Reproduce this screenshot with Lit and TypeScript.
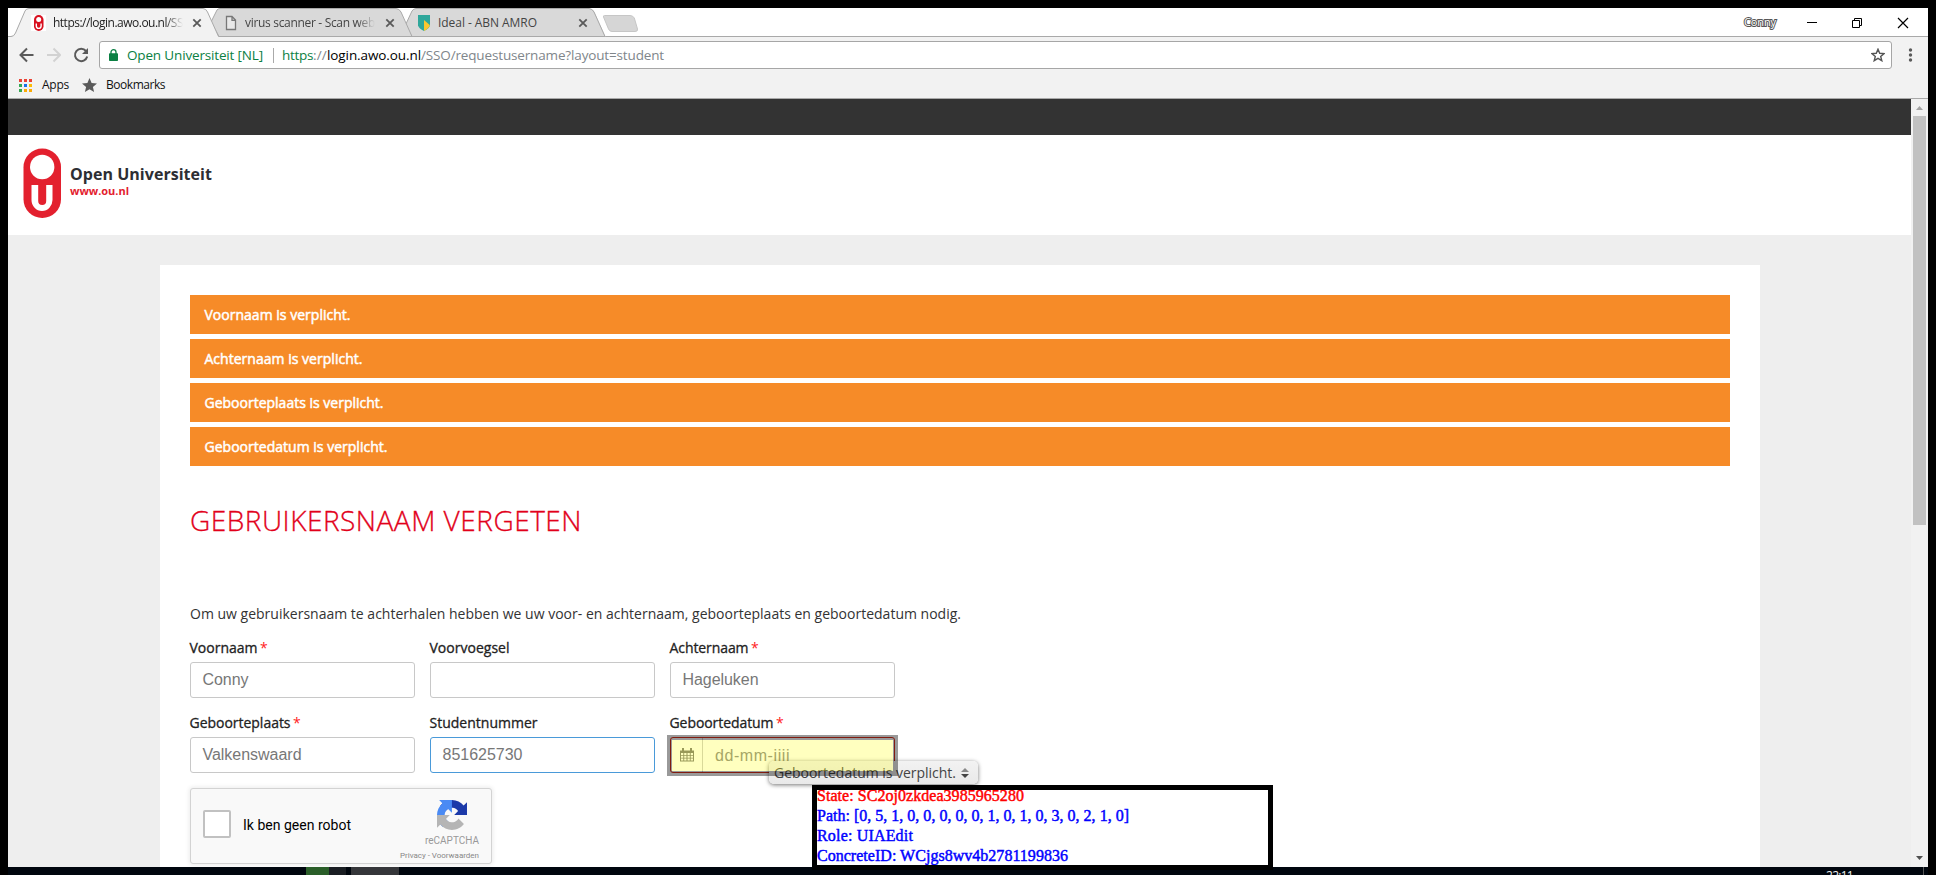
import { LitElement, html, css, svg, nothing } from "lit";
import { customElement, property, state, query } from "lit/decorators.js";
import { styleMap } from "lit/directives/style-map.js";

/** A single line of text whose letter spacing is computed so that it spans `w` pixels. */
@customElement("fit-text")
class FitText extends LitElement {
  @property() text = "";
  @property({ type: Number }) w = 0;
  @state() private spacing = 0;
  @query("span") private span!: HTMLSpanElement;

  static styles = css`
    :host { display: inline-block; white-space: pre; }
  `;

  firstUpdated() {
    const natural = this.span.getBoundingClientRect().width;
    if (this.w && natural) this.spacing = (this.w - natural) / this.text.length;
  }

  render() {
    return html`<span style=${styleMap({ letterSpacing: `${this.spacing}px` })}>${this.text}</span>`;
  }
}

const fit = (text: string, w: number) => html`<fit-text .text=${text} .w=${w}></fit-text>`;

@customElement("browser-chrome")
class BrowserChrome extends LitElement {
  static styles = css`
    :host { display: block; font-family: "Open Sans", "Noto Sans", sans-serif; background: #f2f2f2; color: #222; }
    svg { display: block; flex: none; }
    .strip { display: flex; height: 29px; position: relative; background: #fff; }
    .shapes { position: absolute; left: 0; top: 0; }
    .tab { display: flex; align-items: center; position: relative; height: 29px; box-sizing: border-box; font-size: 12px; line-height: 29px; }
    .t1 { width: 212px; padding-left: 23px; }
    .t2 { width: 196px; padding-left: 5px; color: #444; }
    .t3 { width: 196px; padding-left: 2px; color: #444; }
    .label { margin-left: 7px; overflow: hidden; width: 130px; height: 29px; }
    .t2 .label, .t3 .label { margin-left: 8px; }
    .fade { -webkit-mask-image: linear-gradient(90deg, #000 86%, transparent); mask-image: linear-gradient(90deg, #000 86%, transparent); }
    .close { margin-left: 9px; }
    .t2 .close, .t3 .close { margin-left: 10px; }
    .controls { display: flex; margin-left: auto; position: relative; align-items: center; height: 29px; }
    .user { font-size: 11px; line-height: 27px; color: #fff; -webkit-text-stroke: 2px #555; paint-order: stroke fill; margin-right: 30px; height: 29px; }
    .bar { display: flex; align-items: center; height: 37px; box-sizing: border-box; padding: 0 14px 1px 11px; }
    .nav { display: flex; gap: 12px; margin-right: 10px; }
    .omni { display: flex; align-items: center; flex: 1; height: 28px; box-sizing: border-box; border: 1px solid #a6a6a6; border-radius: 3px; background: #fff; padding: 0 6px 0 9px; font-size: 13.5px; line-height: 26px; margin-right: 15px; }
    .green { color: #0b8043; }
    .org { margin-left: 9px; }
    .sep { width: 1px; height: 15px; background: #aaa; margin: 0 8px 0 10px; }
    .host { color: #000; }
    .rest { color: #80868b; flex: 1; }
    .marks { display: flex; align-items: center; height: 24px; box-sizing: border-box; padding: 0 0 2px 11px; font-size: 12px; line-height: 22px; color: #111; }
    .star { margin: 0 9px 0 13px; }
    .apps { margin-left: 10px; }
    .line { height: 1px; background: #a9a9a9; }
  `;

  private close() {
    return html`<svg class="close" width="10" height="10" viewBox="0 0 10 10"><path d="M1.3 1.3 8.7 8.7M8.7 1.3 1.3 8.7" stroke="#5a5a5a" stroke-width="1.8"/></svg>`;
  }

  render() {
    const dots = ["#ea4335", "#ea4335", "#ea4335", "#34a853", "#1a73e8", "#fbbc05", "#34a853", "#fbab05", "#fbab05"];
    return html`
      <div class="strip">
        <svg class="shapes" width="1920" height="29" viewBox="0 0 1920 29">
          <path d="M0 28.5H1920" stroke="#a9a9a9"/>
          <path d="M206 28.5 402 28.5 396 16 404.500 13 415 .5H580Q585 .5 586.500 4L597.500 28.500H396Z" fill="#d9d9d9" stroke="none"/>
          <path d="M397 18 404 3Q405.500 .5 408 .5H581Q584 .5 586 4L597 28.500H404Z" fill="#d9d9d9" stroke="#a9a9a9"/>
          <path d="M203 14 209 2Q210 .5 212 .5H388Q391 .5 393 4L404 28.500H211Z" fill="#d9d9d9" stroke="#a9a9a9"/>
          <path d="M0 29V28.500H3Q6 28.500 7.500 25L17 3Q18 .5 21 .5H195Q198 .5 199.500 4L210.500 28.500V29Z" fill="#f2f2f2"/>
          <path d="M0 28.500H3Q6 28.500 7.500 25L17 3Q18 .5 21 .5H195Q198 .5 199.500 4L210.500 28.500" fill="none" stroke="#a9a9a9"/>
          <path d="M596.500 7.500H622Q625 7.500 626.300 10L629.500 21Q630 23.500 627 23.500H604Q601.500 23.500 600.500 21L595.500 9Q595 7.500 596.500 7.500Z" fill="#d6d6d6" stroke="#c6c6c6"/>
        </svg>
        <div class="tab t1">
          <svg width="15" height="16" viewBox="0 0 15 16"><rect width="15" height="16" fill="#fff"/><rect x="3" y="0" width="9.500" height="16" rx="4.700" fill="#d8101f"/><circle cx="7.700" cy="4.500" r="2.500" fill="#fff"/><path d="M5.300 8.500V11a2.400 2.400 0 0 0 4.800 0V8.500" fill="none" stroke="#fff" stroke-width="1.400"/></svg>
          <div class="label fade">${fit("https://login.awo.ou.nl/SS", 130)}</div>
          ${this.close()}
        </div>
        <div class="tab t2">
          <svg width="12" height="16" viewBox="0 0 12 16"><path d="M1.500 1.500H7L10.500 5V14.500H1.500ZM7 1.500V5.300H10.500" fill="#e8e8e8" stroke="#777" stroke-width="1.300"/></svg>
          <div class="label fade">${fit("virus scanner - Scan web", 130)}</div>
          ${this.close()}
        </div>
        <div class="tab t3">
          <svg width="12" height="16" viewBox="0 0 12 16"><path d="M0 0H12V10.500Q11 13.500 6 16Q1 13.500 0 10.500Z" fill="#2fa79b"/><path d="M6 5 12 10.300Q11 13.500 6 16Z" fill="#fcc72f"/></svg>
          <div class="label">${fit("Ideal - ABN AMRO", 99)}</div>
          ${this.close()}
        </div>
        <div class="controls">
          <span class="user">${fit("Conny", 32)}</span>
          <svg width="122" height="12" viewBox="0 0 122 12" fill="none" stroke="#000"><path d="M1 5.500H11"/><path d="M46.500 3.500H53.500V10.500H46.500ZM48.500 3.500V1.500H55.500V8.500H53.500"/><path d="M92 1 102 11M102 1 92 11" stroke-width="1.200"/></svg>
        </div>
      </div>
      <div class="bar">
        <div class="nav">
          <svg width="15" height="16" viewBox="0 0 15 16" fill="none" stroke="#5a5a5a" stroke-width="2"><path d="M14.500 8H2M8 1.500 1.500 8 8 14.500"/></svg>
          <svg width="15" height="16" viewBox="0 0 15 16" fill="none" stroke="#d2d2d2" stroke-width="2"><path d="M1 8H13.500M7.500 1.500 14 8 7.500 14.500"/></svg>
          <svg width="16" height="16" viewBox="0 0 16 16"><path d="M13 4A6.200 6.200 0 1 0 14.200 9.500" fill="none" stroke="#5a5a5a" stroke-width="2"/><path d="M15 1V7H9Z" fill="#5a5a5a"/></svg>
        </div>
        <div class="omni">
          <svg width="9" height="12" viewBox="0 0 9 12"><rect y="4.300" width="9" height="7.700" rx=".8" fill="#0b8043"/><path d="M2 5V3A2.500 2.300 0 0 1 7 3V5" fill="none" stroke="#0b8043" stroke-width="1.300"/></svg>
          <span class="green org">${fit("Open Universiteit [NL]", 136)}</span>
          <span class="sep"></span>
          <span class="green">${fit("https", 31)}</span><span class="rest">${fit("://", 14)}<span class="host">${fit("login.awo.ou.nl", 94)}</span>${fit("/SSO/requestusername?layout=student", 243)}</span>
          <svg width="14" height="14" viewBox="0 0 14 14"><path d="M7 1.200 8.700 5.300 13 5.600 9.700 8.400 10.800 12.700 7 10.400 3.200 12.700 4.300 8.400 1 5.600 5.300 5.300Z" fill="none" stroke="#555" stroke-width="1.400"/></svg>
        </div>
        <svg width="7" height="14" viewBox="0 0 7 14" fill="#5a5a5a"><circle cx="3.500" cy="2" r="1.700"/><circle cx="3.500" cy="7" r="1.700"/><circle cx="3.500" cy="12" r="1.700"/></svg>
      </div>
      <div class="marks">
        <svg width="13" height="13" viewBox="0 0 13 13">${dots.map((c, i) => svg`<rect x=${(i % 3) * 5} y=${Math.floor(i / 3) * 5} width="3" height="3" fill=${c}/>`)}</svg>
        <span class="apps">${fit("Apps", 27)}</span>
        <svg class="star" width="15" height="14" viewBox="0 0 15 14"><path d="M7.500 0 9.600 4.900 15 5.400 10.900 8.900 12.100 14 7.500 11.200 2.900 14 4.100 8.900 0 5.400 5.400 4.900Z" fill="#5a5a5a"/></svg>
        ${fit("Bookmarks", 59)}
      </div>
      <div class="line"></div>
    `;
  }
}

interface Field { label: string; lw: number; value: string; vw: number; required?: boolean; focus?: boolean; date?: boolean }

const FIELDS: Field[] = [
  { label: "Voornaam", lw: 68, value: "Conny", vw: 46, required: true },
  { label: "Voorvoegsel", lw: 80, value: "", vw: 0 },
  { label: "Achternaam", lw: 79, value: "Hageluken", vw: 76, required: true },
  { label: "Geboorteplaats", lw: 101, value: "Valkenswaard", vw: 99, required: true },
  { label: "Studentnummer", lw: 108, value: "851625730", vw: 80, focus: true },
  { label: "Geboortedatum", lw: 104, value: "dd-mm-jjjj", vw: 75, required: true, date: true },
];

@customElement("forgot-form")
class ForgotForm extends LitElement {
  static styles = css`
    :host { display: block; background: #fff; padding: 30px; box-sizing: border-box; font-family: "Open Sans", "Noto Sans", sans-serif; font-size: 14px; color: #333; }
    .alerts { display: flex; flex-direction: column; gap: 5px; }
    .alert { height: 39px; line-height: 40px; background: #f68b28; color: #fff; padding-left: 14.5px; -webkit-text-stroke: .5px #fff; }
    .title { margin: 34px 0 0; height: 40px; line-height: 40px; font-size: 28px; font-weight: 300; color: #e2001a; -webkit-text-stroke: .3px #e2001a; }
    .intro { margin-top: 62px; height: 24px; line-height: 24px; }
    .grid { display: grid; grid-template-columns: repeat(3, 225px); gap: 15px; margin-top: 12px; }
    .field { height: 60px; display: flex; flex-direction: column; }
    .label { height: 24px; line-height: 20px; color: #222; -webkit-text-stroke: .3px #222; margin-left: -.5px; }
    .req { color: #f22; margin-left: 2.5px; -webkit-text-stroke: 0; }
    .box { height: 36px; box-sizing: border-box; border: 1px solid #c8c8c8; border-radius: 3px; padding-left: 11.5px; font-family: "Liberation Sans", Arial, sans-serif; font-size: 16px; line-height: 34px; color: #777; position: relative; }
    .focus { border-color: #4a9ad9; }
    .date { border-color: #d8301a; padding-left: 0; display: flex; }
    .cal { width: 31px; border-right: 1px solid #ccc; display: flex; align-items: center; justify-content: center; }
    .date .text { margin-left: 12px; line-height: 35px; color: #888; }
    .mark { position: absolute; left: -4px; top: -3px; width: 231px; height: 41px; box-sizing: border-box; border: 5px solid rgba(0, 0, 0, .4); z-index: 3; }
    .tint { height: 100%; background: rgba(255, 255, 0, .25); }
    .tip { position: absolute; left: 98px; top: 23px; width: 209px; height: 23px; box-sizing: border-box; border-radius: 5px; background: linear-gradient(#f2f2f2, #e9e9e9); box-shadow: 0 1px 4px rgba(0, 0, 0, .55); padding: 0 9px 0 5px; font: 14px/23px "Open Sans", sans-serif; color: #444; display: flex; align-items: center; justify-content: space-between; white-space: nowrap; z-index: 2; }
    .captcha { margin-top: 15px; width: 302px; height: 76px; box-sizing: border-box; border: 1px solid #d3d3d3; border-radius: 3px; box-shadow: 0 0 4px 1px rgba(0, 0, 0, .08); background: #f9f9f9; display: flex; font-family: Roboto, sans-serif; padding-left: 12px; }
    .check { width: 28px; height: 28px; box-sizing: border-box; border: 2px solid #c1c1c1; border-radius: 2px; background: #fff; margin: 21px 12px 0 0; }
    .robot { font-size: 14px; line-height: 20px; color: #000; margin-top: 26px; }
    .brand { margin: 11px 12px 0 auto; display: flex; flex-direction: column; align-items: flex-end; color: #888; }
    .brand svg { margin-right: 12px; }
    .name { font-size: 10px; line-height: 12px; margin-top: 4.5px; color: #999; }
    .legal { font-size: 8px; line-height: 10px; margin-top: 4px; }
  `;

  private box(f: Field) {
    if (!f.date) return html`<div class="box ${f.focus ? "focus" : ""}">${f.value ? fit(f.value, f.vw) : nothing}</div>`;
    return html`
      <div class="box date">
        <div class="cal">
          <svg width="14" height="14" viewBox="0 0 14 14"><path d="M0 2.500H14V13.500H0Z" fill="#777"/><path d="M3 0V3.500M11 0V3.500" stroke="#777" stroke-width="2"/><g fill="#fff"><path d="M1 5h2.300v2H1zM4.200 5h2.300v2H4.200zM7.500 5h2.300v2H7.500zM10.700 5H13v2h-2.300zM1 7.800h2.300v2H1zM4.200 7.800h2.300v2H4.200zM7.500 7.800h2.300v2H7.500zM10.700 7.800H13v2h-2.300zM1 10.600h2.300v2H1zM4.200 10.600h2.300v2H4.200zM7.500 10.600h2.300v2H7.500zM10.700 10.600H13v2h-2.300z"/></g></svg>
        </div>
        <div class="text">${fit(f.value, f.vw)}</div>
        <div class="tip">${fit("Geboortedatum is verplicht.", 182)}<svg width="8" height="10" viewBox="0 0 8 10"><path d="M4 0 8 4H0Z" fill="#888"/><path d="M0 6H8L4 10Z" fill="#444"/></svg></div>
        <div class="mark"><div class="tint"></div></div>
      </div>`;
  }

  render() {
    return html`
      <div class="alerts">
        <div class="alert">${fit("Voornaam is verplicht.", 146)}</div>
        <div class="alert">${fit("Achternaam is verplicht.", 158)}</div>
        <div class="alert">${fit("Geboorteplaats is verplicht.", 179)}</div>
        <div class="alert">${fit("Geboortedatum is verplicht.", 183)}</div>
      </div>
      <h1 class="title">${fit("GEBRUIKERSNAAM VERGETEN", 392)}</h1>
      <div class="intro">${fit("Om uw gebruikersnaam te achterhalen hebben we uw voor- en achternaam, geboorteplaats en geboortedatum nodig.", 771)}</div>
      <div class="grid">
        ${FIELDS.map((f) => html`<div class="field"><div class="label">${fit(f.label, f.lw)}${f.required ? html`<span class="req">*</span>` : nothing}</div>${this.box(f)}</div>`)}
      </div>
      <div class="captcha">
        <div class="check"></div>
        <div class="robot">${fit("Ik ben geen robot", 108)}</div>
        <div class="brand">
          <svg width="30" height="30" viewBox="0 0 64 64">
            <path fill="#1c3aa9" d="M64 31.955l-.033-1.370V4.687l-7.160 7.160C50.948 4.674 42.033.093 32.050.093c-10.400 0-19.622 4.960-25.458 12.640l11.736 11.860a15.550 15.550 0 0 1 4.754-5.334c2.050-1.600 4.952-2.906 8.968-2.906.485 0 .860.057 1.135.163 4.976.393 9.288 3.140 11.828 7.124l-8.307 8.307L64 31.953"/>
            <path fill="#4a8af4" d="M31.862.094l-1.370.033H4.594l7.160 7.160C4.580 13.147 0 22.060 0 32.046c0 10.400 4.960 19.622 12.640 25.458L24.500 45.768a15.550 15.550 0 0 1-5.334-4.754c-1.600-2.050-2.906-4.952-2.906-8.968 0-.485.057-.860.163-1.135.393-4.976 3.140-9.288 7.124-11.828l8.307 8.307L31.860.095"/>
            <path fill="#b5b5b5" d="M.001 32.045l.033 1.370v25.898l7.160-7.160c5.860 7.173 14.774 11.754 24.760 11.754 10.400 0 19.622-4.960 25.458-12.640l-11.736-11.860a15.550 15.550 0 0 1-4.754 5.334c-2.050 1.600-4.952 2.906-8.968 2.906-.485 0-.860-.057-1.135-.163-4.976-.393-9.288-3.140-11.828-7.124l8.307-8.307c-10.522.040-22.400.066-27.295-.005"/>
          </svg>
          <div class="name">${fit("reCAPTCHA", 54)}</div>
          <div class="legal">${fit("Privacy - Voorwaarden", 79)}</div>
        </div>
      </div>
    `;
  }
}

@customElement("app-root")
class AppRoot extends LitElement {
  static styles = css`
    :host { display: grid; grid-template-rows: 91px 768px 8px; width: 1936px; height: 875px; padding: 8px 8px 0; box-sizing: border-box; background: #000; overflow: hidden; position: relative; }
    .view { display: flex; overflow: hidden; background: #eee; }
    .page { width: 1903px; font-family: "Open Sans", sans-serif; }
    .dark { height: 36px; background: #333; }
    .head { height: 100px; box-sizing: border-box; background: #fff; display: flex; padding: 13px 0 0 15px; }
    .names { padding: 14px 0 0 9px; }
    .uni { font-size: 16px; font-weight: 700; line-height: 24px; color: #2d2e33; }
    .www { font-size: 11px; font-weight: 700; line-height: 12px; color: #e3202e; margin-top: -1px; }
    .card { margin: 30px 151px 0 152px; height: 700px; }
    .scroll { width: 17px; box-sizing: border-box; background: #f1f1f1; display: flex; flex-direction: column; align-items: center; padding: 7px 0 7px; }
    .thumb { width: 13px; height: 409px; background: #c1c1c1; margin: 6px 0 auto; }
    .taskbar { display: flex; background: #00060e; overflow: hidden; }
    .green { width: 23px; margin-left: 298px; background: #2a5e29; }
    .edge { width: 17px; background: #1a1e23; }
    .grey { width: 48px; margin-left: 5px; background: #35363a; }
    .clock { margin-left: auto; padding-right: 70px; font: 12px/18px "Open Sans", sans-serif; color: #eee; }
    .peek { width: 1px; background: #555; margin-right: 4px; }
    .info { position: absolute; left: 812px; top: 785px; width: 461px; height: 85px; box-sizing: border-box; border: 5px solid #000; background: #fff; font: 16px/20px "Liberation Serif", "Times New Roman", serif; color: #00f; -webkit-text-stroke: .45px currentColor; z-index: 5; overflow: hidden; }
    .row { height: 20px; }
    .lines { margin-top: -4px; }
    .state { color: #f00; }
  `;

  render() {
    return html`
      <browser-chrome></browser-chrome>
      <div class="view">
        <div class="page">
          <div class="dark"></div>
          <div class="head">
            <svg width="38" height="70" viewBox="0 0 38 70"><rect x=".5" y=".5" width="37.500" height="69.500" rx="18.700" fill="#e3202e"/><circle cx="19.200" cy="19" r="12.200" fill="#fff"/><path d="M8.500 37H15.200V53A4 4 0 0 0 23.200 53V37H29.500V52A10.500 11 0 0 1 8.500 52Z" fill="#fff"/></svg>
            <div class="names">
              <div class="uni">${fit("Open Universiteit", 142)}</div>
              <div class="www">${fit("www.ou.nl", 59)}</div>
            </div>
          </div>
          <forgot-form class="card"></forgot-form>
        </div>
        <div class="scroll">
          <svg width="7" height="4" viewBox="0 0 7 4"><path d="M0 4 3.500 0 7 4Z" fill="#a3a3a3"/></svg>
          <div class="thumb"></div>
          <svg width="7" height="4" viewBox="0 0 7 4"><path d="M0 0H7L3.500 4Z" fill="#505050"/></svg>
        </div>
      </div>
      <div class="taskbar">
        <div class="green"></div><div class="edge"></div><div class="grey"></div>
        <div class="clock">${fit("22:11", 27)}</div>
        <div class="peek"></div>
      </div>
      <div class="info">
        <div class="lines">
          <div class="row state">${fit("State: SC2oj0zkdea3985965280", 207)}</div>
          <div class="row">${fit("Path: [0, 5, 1, 0, 0, 0, 0, 0, 1, 0, 1, 0, 3, 0, 2, 1, 0]", 312)}</div>
          <div class="row">${fit("Role: UIAEdit", 96)}</div>
          <div class="row">${fit("ConcreteID: WCjgs8wv4b2781199836", 251)}</div>
        </div>
      </div>
    `;
  }
}
